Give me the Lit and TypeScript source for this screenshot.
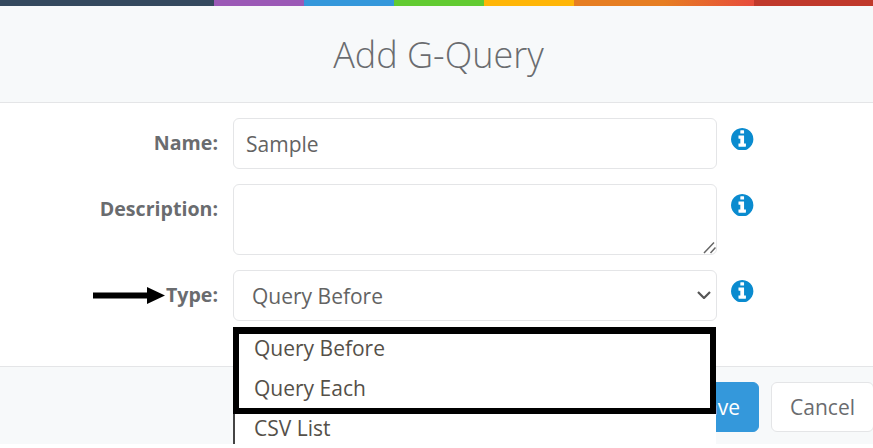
import { css, html, LitElement } from "lit";
import { customElement } from "lit/decorators.js";

const infoIcon = html`<svg class="info" viewBox="128 128 1536 1536" aria-hidden="true"><path fill="currentColor" d="M1152 1376v-160q0-14-9-23t-23-9h-96v-512q0-14-9-23t-23-9h-320q-14 0-23 9t-9 23v160q0 14 9 23t23 9h96v320h-96q-14 0-23 9t-9 23v160q0 14 9 23t23 9h448q14 0 23-9t9-23zm-128-896v-160q0-14-9-23t-23-9h-192q-14 0-23 9t-9 23v160q0 14 9 23t23 9h192q14 0 23-9t9-23zm640 416q0 209-103 385.5t-279.5 279.5-385.5 103-385.5-103-279.5-279.5-103-385.5 103-385.5 279.5-279.5 385.5-103 385.5 103 279.5 279.5 103 385.5z"/></svg>`;

@customElement("app-root")
export class AppRoot extends LitElement {
	static override styles = css`
		:host {
			display: block;
			position: relative;
			width: 873px;
			height: 448px;
			overflow: hidden;
			background: #fff;
			font-family: "Open Sans", sans-serif;
			color: #6a6c6f;
		}

		.modal {
			display: flex;
			flex-direction: column;
			height: 444px;
			overflow: hidden;
			position: relative;
		}

		.color-line {
			height: 6px;
			flex: none;
			background-image: linear-gradient(
				to right,
				#34495e 214px,
				#9b59b6 214px 304px,
				#3498db 304px 394px,
				#62cb31 394px 484px,
				#ffb606 484px 574px,
				#e67e22 574px 664px,
				#e74c3c 754px,
				#c0392b 754px
			);
		}

		.header {
			height: 96px;
			flex: none;
			display: flex;
			align-items: center;
			justify-content: center;
			padding-left: 4px;
			background: #f7f9fa;
			border-bottom: 1px solid #e4e5e7;
		}

		h4 {
			margin: 2px 0 0;
			font-size: 36px;
			font-weight: 300;
			line-height: 1;
			color: #6a6c6f;
		}

		.form {
			flex: none;
			display: flex;
			flex-direction: column;
			gap: 15px;
			padding: 15px 0 45px;
		}

		.row {
			display: grid;
			grid-template-columns: 218px 484px 22px;
			column-gap: 15px;
			align-items: start;
		}

		.row .info {
			margin: 9.5px 0 0 -0.7px;
		}

		label {
			text-align: right;
			font-size: 19.6px;
			font-weight: 700;
			line-height: 50px;
			color: #6a6c6f;
		}

		.control {
			position: relative;
		}

		input,
		textarea,
		select {
			display: block;
			width: 100%;
			box-sizing: border-box;
			margin: 0;
			background: #fff;
			border: 1px solid #e4e5e7;
			border-radius: 6px;
			font-family: inherit;
			font-size: 21px;
			color: #636363;
			outline: none;
		}

		input {
			height: 51px;
			padding: 0 12px;
		}

		textarea {
			height: 71px;
			padding: 8px 12px;
			resize: none;
		}

		select {
			height: 51px;
			padding: 0 18px;
			appearance: none;
		}

		.chevron,
		.grip {
			position: absolute;
			pointer-events: none;
		}

		.chevron {
			right: 6px;
			top: 21px;
			width: 14px;
			height: 8px;
		}

		.grip {
			right: 1px;
			bottom: 1px;
			width: 13px;
			height: 13px;
		}

		.info {
			display: block;
			width: 22.4px;
			height: 22.4px;
			color: #0a8bcf;
		}

		.footer {
			flex: 1;
			display: flex;
			justify-content: flex-end;
			align-items: flex-start;
			gap: 12px;
			padding: 15px 0 0;
			margin-right: -1px;
			background: #f7f9fa;
			border-top: 1px solid #e4e5e7;
		}

		button {
			height: 50px;
			padding: 0 18px;
			box-sizing: border-box;
			border: 1px solid #e4e5e7;
			border-radius: 6px;
			background: #fff;
			font-family: inherit;
			font-size: 21px;
			color: #6a6c6f;
		}

		button.primary {
			background: #3498db;
			border-color: #3498db;
			color: #fff;
		}

		.dropdown {
			position: absolute;
			left: 233px;
			top: 327px;
			width: 483px;
			height: 117px;
			box-sizing: border-box;
			padding-top: 1px;
			background: #fff;
			border-left: 2px solid #444;
			overflow: hidden;
		}

		.option {
			height: 40px;
			line-height: 40px;
			padding-left: 19px;
			font-size: 21px;
			color: #555049;
		}

		.mark {
			position: absolute;
			left: 233px;
			top: 327px;
			width: 483px;
			height: 87px;
			box-sizing: border-box;
			border: 6px solid #000;
			border-top-width: 7px;
		}

		.arrow {
			position: absolute;
			left: 93px;
			top: 287px;
			width: 72px;
			height: 17px;
		}
	`;

	override render() {
		return html`
			<div class="modal">
				<div class="color-line"></div>
				<div class="header"><h4>Add G-Query</h4></div>
				<div class="form">
					<div class="row">
						<label>Name:</label>
						<div class="control"><input type="text" .value=${"Sample"} /></div>
						${infoIcon}
					</div>
					<div class="row">
						<label>Description:</label>
						<div class="control">
							<textarea></textarea>
							<svg class="grip" viewBox="0 0 13 13" aria-hidden="true">
								<path fill="none" stroke="#666" stroke-width="1.5" d="M1 12 11 1.5M7.5 12l5-5.5" />
							</svg>
						</div>
						${infoIcon}
					</div>
					<div class="row">
						<label>Type:</label>
						<div class="control">
							<select>
								<option>Query Before</option>
								<option>Query Each</option>
								<option>CSV List</option>
							</select>
							<svg class="chevron" viewBox="0 0 14 8" aria-hidden="true">
								<path fill="none" stroke="#555" stroke-width="2.2" d="M1 1l6 6 6-6" />
							</svg>
						</div>
						${infoIcon}
					</div>
				</div>
				<div class="footer">
					<button class="primary">Save</button>
					<button>Cancel</button>
				</div>
				<div class="dropdown">
					<div class="option">Query Before</div>
					<div class="option">Query Each</div>
					<div class="option">CSV List</div>
				</div>
				<div class="mark"></div>
				<svg class="arrow" viewBox="0 0 72 17" aria-hidden="true">
					<path fill="#000" d="M0 5.5h54V0l18 8.5L54 17v-5.5H0z" />
				</svg>
			</div>
		`;
	}
}

declare global {
	interface HTMLElementTagNameMap {
		"app-root": AppRoot;
	}
}
